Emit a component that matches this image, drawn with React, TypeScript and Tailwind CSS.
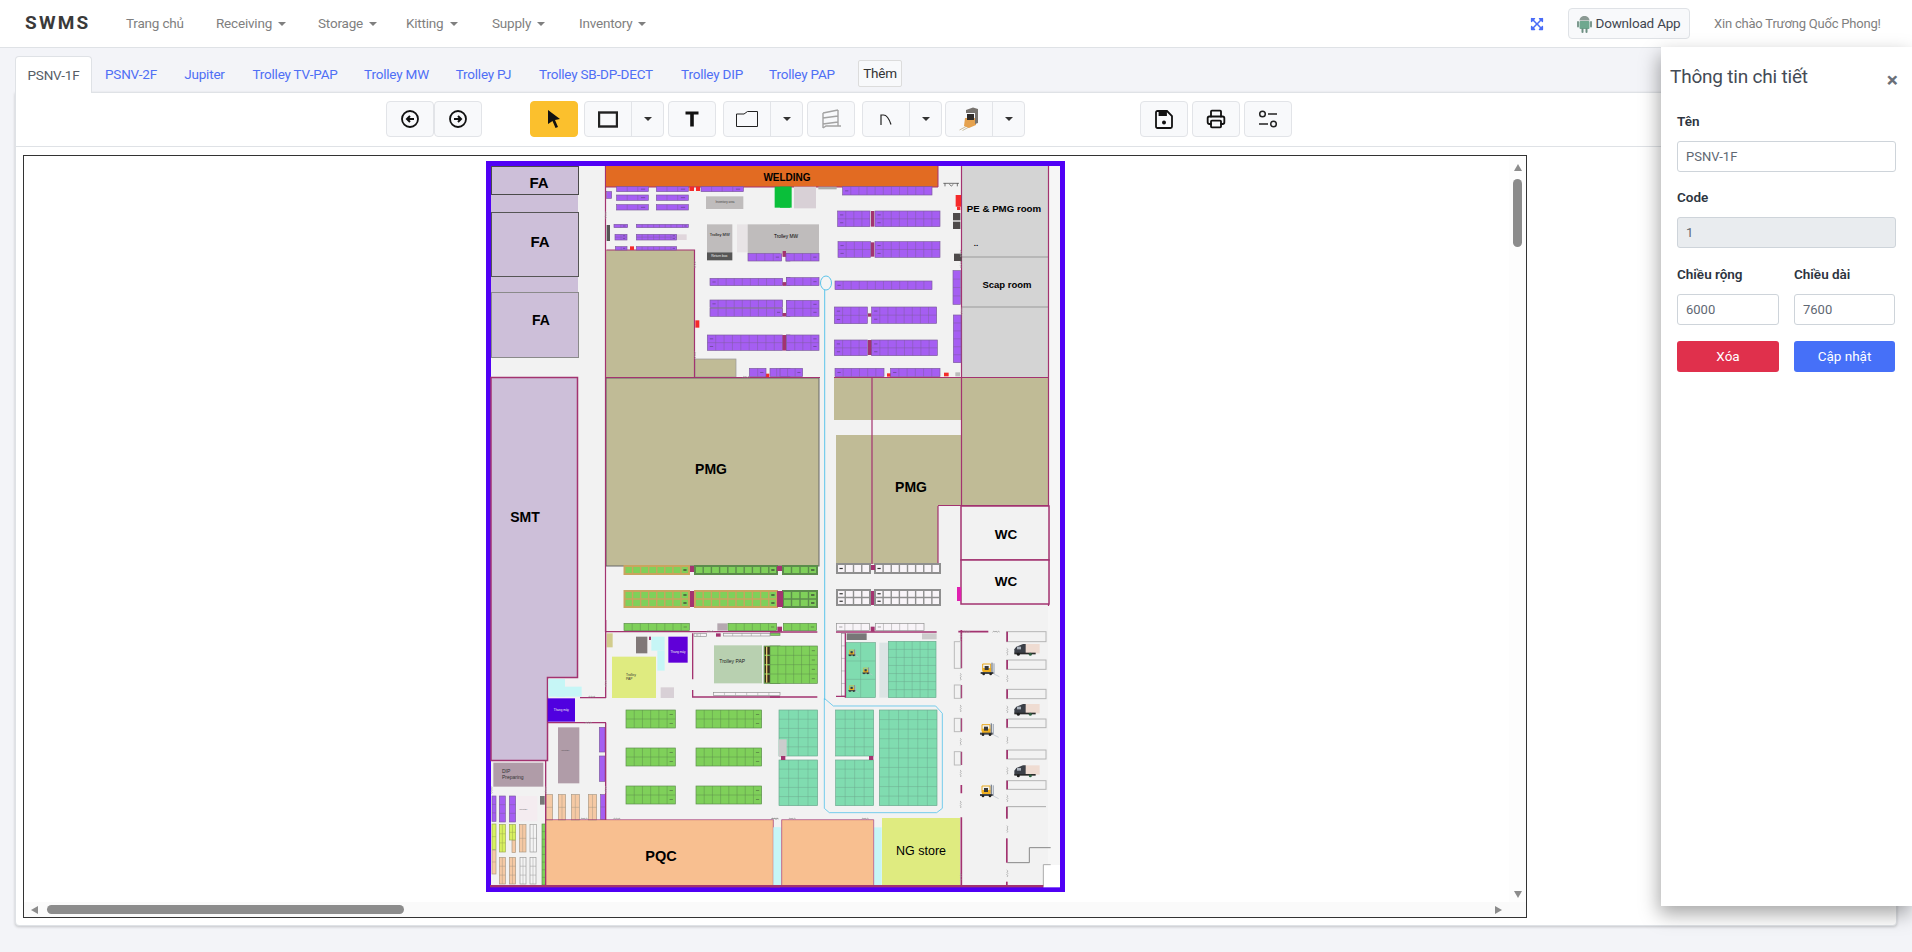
import React from "react";
import { FaExpandArrowsAlt } from "react-icons/fa";
import { Printer } from "lucide-react";

type R = [number, number, number, number, number, number, ("l" | "r" | "")?];
type B = [number, number, number, number, string];

function Rack({ d, fill, line }: { d: R; fill: string; line: string }) {
  const [x1, y1, x2, y2, c, r, tag] = d;
  const cw = (x2 - x1) / c;
  const rh = (y2 - y1) / r;
  const vs = Array.from({ length: c - 1 }, (_, i) => x1 + cw * (i + 1));
  const hs = Array.from({ length: r - 1 }, (_, i) => y1 + rh * (i + 1));
  const rows = Array.from({ length: r }, (_, i) => y1 + rh * (i + 0.5));
  return (
    <g>
      <rect x={x1} y={y1} width={x2 - x1} height={y2 - y1} fill={fill} stroke={line} strokeWidth={2} />
      {vs.map((x) => (
        <line key={x} x1={x} x2={x} y1={y1} y2={y2} stroke={line} strokeWidth={1.4} />
      ))}
      {hs.map((y) => (
        <line key={y} x1={x1} x2={x2} y1={y} y2={y} stroke={line} strokeWidth={1.4} />
      ))}
      {tag
        ? rows.map((y) => (
            <line
              key={y}
              x1={tag === "r" ? x2 - cw * 0.7 : x1 + cw * 0.3}
              x2={tag === "r" ? x2 - cw * 0.3 : x1 + cw * 0.7}
              y1={y}
              y2={y}
              stroke="#333"
              strokeWidth={1.2}
            />
          ))
        : null}
    </g>
  );
}

function Boxes({ list }: { list: B[] }) {
  return (
    <g>
      {list.map(([x1, y1, x2, y2, f], i) => (
        <rect key={i} x={x1} y={y1} width={x2 - x1} height={y2 - y1} fill={f} />
      ))}
    </g>
  );
}

function Racks({ list, fill, line }: { list: R[]; fill: string; line: string }) {
  return (
    <g>
      {list.map((d, i) => (
        <Rack key={i} d={d} fill={fill} line={line} />
      ))}
    </g>
  );
}

function SqV({ x, y }: { x: number; y: number }) {
  return <path d={`M${x} ${y} q7 3 1 7 q6 3 -1 7 q7 3 1 7`} fill="none" stroke="#9a9a9a" strokeWidth={2} />;
}

function SqH({ x, y }: { x: number; y: number }) {
  return <path d={`M${x} ${y} q3 -7 7 -1 q3 -6 7 1 q3 -7 7 -1`} fill="none" stroke="#8a8a8a" strokeWidth={2} />;
}

function Forklift({ x, y, s = 1 }: { x: number; y: number; s?: number }) {
  return (
    <g transform={`translate(${x} ${y}) scale(${s})`}>
      <path d="M6 4 H30 V24 H6 Z" fill="none" stroke="#e8a81c" strokeWidth={3} />
      <rect x={6} y={16} width={26} height={14} fill="#f0b020" />
      <rect x={12} y={10} width={12} height={12} fill="#3a3a3a" />
      <rect x={32} y={0} width={4} height={34} fill="#7f8794" />
      <rect x={38} y={2} width={4} height={32} fill="#aab2be" />
      <path d="M40 34 L56 42" stroke="#c4cad2" strokeWidth={2.5} />
      <rect x={0} y={28} width={38} height={6} fill="#42464c" />
      <circle cx={9} cy={34} r={4} fill="#222" />
      <circle cx={30} cy={34} r={4} fill="#222" />
    </g>
  );
}

function Truck({ x, y }: { x: number; y: number }) {
  return (
    <g transform={`translate(${x} ${y})`}>
      <rect x={28} y={0} width={48} height={28} fill="#efdcd2" />
      <path d="M0 16 L6 8 L26 0 L34 0 L34 28 L0 28 Z" fill="#3c4048" />
      <rect x={8} y={8} width={12} height={8} fill="#aab2bc" />
      <rect x={0} y={26} width={64} height={5} fill="#2a2a2a" />
      <circle cx={12} cy={31} r={4.5} fill="#1c1c1c" />
      <circle cx={48} cy={31} r={4.5} fill="#2f5f3f" />
    </g>
  );
}

const WALL = "#a33370";
const OLIVE = "#c0bb96";
const LAV = "#cdbfd9";
const CYAN = "#c6f6f6";
const GY = "#bfbcbc";
const PUR = "#a55ef2";
const PURL = "#7d5c9c";
const GRN = "#7fd05a";
const GRNL = "#5c8c4c";
const TEAL = "#80dcb0";
const TEALL = "#6ba88e";
const PCH = "#f5c9a4";
const PCHL = "#a99884";
const WRK = "#f8f4f8";
const WRKL = "#8f8f8f";

function FloorPlan() {
  const t = { fontFamily: '"Liberation Sans", Arial, sans-serif', fontWeight: 700, fill: "#000" };
  return (
    <svg width={580} height={732} viewBox="486 161 580 732" className="block">
      <rect x={486} y={161} width={579} height={731} fill="#5000f5" />
      <rect x={491} y={166} width={569} height={721} fill="#f2f2f2" />
      <rect x={1048} y={166} width={12} height={721} fill="#f6f6f6" />

      {/* left column */}
      <rect x={491} y={166} width={87} height={126} fill={LAV} />
      <rect x={491.5} y={166.5} width={87} height={28} fill={LAV} stroke="#4a4a4a" strokeWidth={1} />
      <rect x={491.5} y={212.5} width={87} height={64} fill={LAV} stroke="#555" strokeWidth={1} />
      <rect x={491.5} y={292.5} width={87} height={65} fill={LAV} stroke="#8a8a8a" strokeWidth={1} />
      <path d="M491 377.5 H577.5 V677.5 H547.5 V760.5 H491 Z" fill={LAV} stroke={WALL} strokeWidth={1.5} />

      {/* olive areas */}
      <rect x={606} y={250} width={89} height={127} fill={OLIVE} />
      <rect x={695} y={359} width={41} height={18} fill={OLIVE} stroke="#999" strokeWidth={0.7} />
      <rect x={606} y={378} width={213} height={188} fill={OLIVE} stroke="#666" strokeWidth={1} />
      <rect x={834} y={378} width={127} height={42} fill={OLIVE} />
      <rect x={836} y={435} width={36} height={129} fill={OLIVE} />
      <rect x={872} y={435} width={89} height={71} fill={OLIVE} />
      <rect x={872} y={506} width={66} height={58} fill={OLIVE} />
      <rect x={961} y={378} width={87} height={127} fill={OLIVE} />
      <path
        d="M872 378 V564 M834 377.5 H1048 M606.5 250 H694.5 V377 M606 377.5 H820 M938 506 V564 M938 505.5 H1048 M605.5 166 V632"
        fill="none"
        stroke={WALL}
        strokeWidth={1.2}
      />

      {/* rooms on right */}
      <rect x={962} y={166} width={86} height={211} fill="#d4d4d4" />
      <path d="M962 257 H1048 M962 307 H1048" stroke="#9a9a9a" strokeWidth={1} />
      <path d="M961.5 166 V506 M1048.5 166 V606" stroke={WALL} strokeWidth={1.2} fill="none" />
      <rect x={961} y={506} width={88} height={54} fill="#f2f2f2" stroke={WALL} strokeWidth={1.5} />
      <rect x={961} y={560} width={88} height={44} fill="#f2f2f2" stroke={WALL} strokeWidth={1.5} />
      <rect x={957} y={587} width={4} height={14} fill="#e020b0" />

      {/* welding */}
      <rect x={606} y={166} width={332} height={21} fill="#e26b22" />
      <path d="M606 187 H938 V166" fill="none" stroke={WALL} strokeWidth={1} />

      {/* top left quadrant */}
      <g transform="translate(480 155) scale(0.33333)">
        <Boxes
          list={[
            [678, 124, 790, 162, GY],
            [681, 208, 757, 292, GY],
            [681, 292, 757, 316, "#555"],
            [771, 208, 803, 292, "#e8e4e6"],
            [803, 208, 930, 295, GY],
            [884, 95, 930, 158, "#0abf3a"],
            [628, 95, 642, 108, "#f52a2a"],
            [648, 95, 660, 108, "#f52a2a"],
            [450, 274, 462, 285, "#f52a2a"],
            [380, 210, 390, 258, "#555"],
            [590, 238, 620, 255, "#e0d6dc"],
            [646, 496, 658, 518, "#f52a2a"],
            [856, 656, 868, 666, "#f52a2a"],
            [908, 288, 918, 305, WALL],
            [908, 382, 918, 392, WALL],
            [908, 474, 918, 484, WALL],
            [908, 540, 918, 586, WALL],
          ]}
        />
        <Racks
          fill={PUR}
          line={PURL}
          list={[
            [410, 95, 505, 110, 3, 1, "r"],
            [529, 95, 625, 110, 3, 1, "r"],
            [663, 95, 790, 110, 4, 1, "r"],
            [410, 120, 505, 136, 3, 1, "r"],
            [529, 120, 625, 136, 3, 1, "r"],
            [410, 149, 505, 165, 3, 1, "r"],
            [529, 149, 625, 165, 3, 1, "r"],
            [380, 110, 395, 130, 1, 1],
            [402, 208, 443, 218, 2, 1, "r"],
            [469, 208, 625, 218, 9, 1, "r"],
            [405, 238, 441, 255, 2, 2, "r"],
            [469, 238, 590, 255, 7, 2, "r"],
            [406, 275, 441, 285, 2, 1, "r"],
            [469, 275, 590, 285, 7, 1, "r"],
            [804, 295, 905, 318, 4, 1, "r"],
            [918, 295, 930, 318, 1, 1],
            [690, 370, 908, 392, 9, 1, "l"],
            [920, 368, 930, 392, 1, 1],
            [690, 435, 908, 458, 9, 1, "l"],
            [690, 460, 908, 484, 9, 1, "r"],
            [920, 436, 930, 484, 1, 2],
            [682, 540, 908, 586, 9, 2, "l"],
            [920, 540, 930, 586, 1, 2],
            [808, 640, 858, 665, 2, 1, "r"],
            [870, 640, 930, 665, 3, 1],
          ]}
        />
        <SqV x={375} y={170} />
        <SqV x={643} y={318} />
        <SqV x={643} y={590} />
        <SqH x={788} y={668} />
        <text x={719} y={243} fontSize={12} style={{ ...t, fontWeight: 400 }} textAnchor="middle">Trolley MW</text>
        <text x={718} y={306} fontSize={10} style={{ ...t, fontWeight: 400, fill: "#eee" }} textAnchor="middle">Return box</text>
        <text x={735} y={144} fontSize={9} style={{ ...t, fontWeight: 400, fill: "#444" }} textAnchor="middle">Inventory area</text>
      </g>

      {/* top right quadrant */}
      <g transform="translate(780 155) scale(0.33333)">
        <Boxes
          list={[
            [0, 208, 117, 295, GY],
            [0, 95, 35, 158, "#0abf3a"],
            [42, 95, 108, 160, "#d8d0d6"],
            [115, 95, 170, 103, "#aaa"],
            [519, 174, 541, 196, "#4e4a4a"],
            [519, 200, 541, 222, "#4e4a4a"],
            [522, 296, 545, 318, "#4e4a4a"],
            [527, 120, 543, 155, "#f52a2a"],
            [531, 155, 541, 165, "#f52a2a"],
            [321, 655, 333, 665, "#f52a2a"],
            [492, 653, 506, 664, "#f52a2a"],
            [526, 652, 540, 664, "#bbb"],
            [273, 168, 283, 215, WALL],
            [273, 262, 283, 305, WALL],
            [264, 475, 274, 485, WALL],
            [264, 555, 276, 600, WALL],
            [8, 288, 18, 305, WALL],
            [8, 382, 18, 392, WALL],
            [8, 474, 18, 484, WALL],
            [8, 540, 18, 586, WALL],
          ]}
        />
        <Racks
          fill={PUR}
          line={PURL}
          list={[
            [18, 295, 117, 318, 4, 1, "r"],
            [20, 368, 117, 392, 4, 1, "r"],
            [20, 436, 117, 484, 4, 2, "r"],
            [20, 540, 117, 586, 4, 2, "r"],
            [0, 640, 68, 665, 3, 1, "r"],
            [188, 95, 456, 120, 11, 1, "l"],
            [173, 168, 270, 215, 4, 2, "l"],
            [285, 168, 480, 215, 8, 2, "l"],
            [174, 260, 272, 307, 4, 2, "l"],
            [285, 260, 480, 307, 8, 2, "l"],
            [165, 378, 456, 404, 12, 1, "l"],
            [163, 456, 262, 506, 4, 2, "l"],
            [275, 456, 470, 505, 8, 2, "l"],
            [163, 555, 262, 602, 4, 2, "l"],
            [275, 555, 472, 602, 8, 2, "l"],
            [165, 640, 312, 665, 6, 1, "l"],
            [332, 640, 480, 665, 6, 1, "l"],
            [519, 347, 541, 448, 1, 4],
            [520, 480, 543, 623, 1, 6],
          ]}
        />
        <path d="M490 85 H537 M495 85 V94 M532 85 V94 M508 88 L514 93 L520 88" stroke="#333" strokeWidth={2} fill="none" />
        <SqV x={540} y={285} />
        <SqV x={540} y={318} />
        <SqV x={543} y={458} />
      </g>

      {/* green / white racks in the middle */}
      <Racks
        fill={GRN}
        line="#c9a45e"
        list={[
          [624.5, 566, 689, 574, 8, 1, "r"],
          [624.5, 591, 689, 607, 8, 2, "r"],
          [695, 591, 777, 607, 10, 2, "r"],
        ]}
      />
      <Racks
        fill={GRN}
        line={GRNL}
        list={[
          [695, 566, 777, 574, 10, 1, "r"],
          [783, 566, 817, 574, 4, 1, "r"],
          [783, 591, 817, 607, 4, 2, "r"],
        ]}
      />
      <Racks
        fill={WRK}
        line={WRKL}
        list={[
          [837, 564, 870, 573, 4, 1, "l"],
          [875, 564, 940, 573, 8, 1, "l"],
          [837, 590, 870, 605, 4, 2, "l"],
          [875, 590, 940, 605, 8, 2, "l"],
        ]}
      />
      <Boxes
        list={[
          [690, 566, 694, 572, WALL],
          [777, 566, 782, 571, WALL],
          [690, 591, 694, 607, WALL],
          [777, 591, 783, 607, WALL],
          [871, 565, 875, 570, WALL],
          [871, 591, 874, 605, WALL],
        ]}
      />

      {/* bottom left quadrant */}
      <g transform="translate(480 620) scale(0.33333)">
        <Boxes
          list={[
            [205, 177, 255, 230, CYAN],
            [230, 200, 305, 230, CYAN],
            [203, 235, 285, 305, "#5000e0"],
            [234, 322, 298, 490, "#b09ca8"],
            [40, 428, 190, 500, "#b09ca8"],
            [112, 528, 172, 604, "#f4ecf0"],
            [180, 528, 194, 554, "#777"],
            [396, 110, 528, 234, "#dfeb80"],
            [468, 50, 502, 100, "#807878"],
            [514, 50, 554, 92, CYAN],
            [532, 92, 554, 152, CYAN],
            [565, 50, 623, 128, "#6000d8"],
            [542, 202, 582, 234, "#d8d0d6"],
            [380, 40, 398, 82, "#d2cc8c"],
            [702, 76, 846, 190, "#b8d0b0"],
            [712, 10, 742, 32, "#b5a8b0"],
            [197, 600, 880, 795, "#f8bf90"],
            [880, 622, 900, 795, CYAN],
            [708, 40, 722, 50, WALL],
            [507, 50, 513, 60, WALL],
          ]}
        />
        <Racks
          fill={GRN}
          line={GRNL}
          list={[
            [432, 10, 628, 32, 8, 1, "r"],
            [744, 10, 890, 32, 6, 1, "r"],
            [438, 270, 586, 324, 6, 2, "r"],
            [648, 270, 845, 324, 8, 2, "r"],
            [438, 384, 586, 438, 6, 2, "r"],
            [648, 384, 845, 438, 8, 2, "r"],
            [438, 498, 586, 552, 6, 2, "r"],
            [648, 498, 845, 552, 8, 2, "r"],
            [852, 78, 900, 190, 2, 4],
            [872, 40, 900, 46, 1, 1],
          ]}
        />
        <Boxes
          list={[
            [854, 80, 870, 104, "#3a2c20"],
            [854, 108, 870, 132, "#3a2c20"],
            [854, 136, 870, 160, "#3a2c20"],
            [854, 164, 870, 188, "#3a2c20"],
            [858, 80, 862, 188, "#e8d070"],
          ]}
        />
        <Racks
          fill={WRK}
          line={WRKL}
          list={[
            [642, 40, 680, 50, 2, 1, "l"],
            [730, 40, 870, 48, 5, 1],
            [700, 218, 900, 226, 6, 1],
          ]}
        />
        <Racks
          fill={PUR}
          line={PURL}
          list={[
            [358, 322, 375, 396, 1, 1],
            [358, 408, 375, 484, 1, 1],
            [36, 528, 48, 604, 1, 3],
            [58, 528, 76, 606, 1, 3],
            [88, 528, 107, 606, 1, 3],
            [362, 524, 376, 598, 1, 2],
          ]}
        />
        <Racks
          fill={PCH}
          line={PCHL}
          list={[
            [198, 524, 218, 600, 1, 2],
            [235, 524, 257, 600, 2, 2],
            [274, 524, 298, 600, 2, 2],
            [325, 524, 350, 600, 2, 2],
            [36, 690, 48, 762, 1, 2],
            [118, 614, 138, 696, 2, 2],
            [58, 712, 76, 792, 2, 3],
            [88, 712, 107, 792, 2, 3],
            [96, 660, 107, 698, 1, 1],
          ]}
        />
        <Racks
          fill="#d8f060"
          line="#9aa850"
          list={[
            [36, 612, 48, 688, 1, 2],
            [58, 614, 76, 696, 2, 3],
            [88, 614, 107, 660, 2, 2],
          ]}
        />
        <Racks
          fill="#f4f4f4"
          line="#999"
          list={[
            [150, 614, 170, 696, 2, 2],
            [120, 712, 138, 792, 2, 3],
            [150, 712, 168, 792, 2, 3],
          ]}
        />
        <Rack d={[186, 612, 196, 795, 1, 8]} fill={GRN} line={GRNL} />
        <path
          d="M377 0 V234 M300 233 H378 M202 308 H378 M377 308 V600 M197 420 V795 M378 35 H900 M638 40 V178 M638 210 V231 H900"
          fill="none"
          stroke={WALL}
          strokeWidth={4}
        />
        <path d="M197 599 H880 M880 599 V795" fill="none" stroke={WALL} strokeWidth={2} />
        <rect x={30} y={795} width={870} height={7} fill={WALL} />
        <SqH x={325} y={232} />
        <SqH x={315} y={310} />
        <SqH x={302} y={598} />
        <SqH x={400} y={598} />
        <SqH x={873} y={598} />
        <SqH x={680} y={36} />
        <SqV x={375} y={180} />
        <SqV x={375} y={498} />
        <SqV x={195} y={500} />
        <SqV x={33} y={500} />
        <text x={244} y={272} fontSize={9} style={{ ...t, fontWeight: 400, fill: "#eee" }} textAnchor="middle">Thang máy</text>
        <text x={594} y={98} fontSize={9} style={{ ...t, fontWeight: 400, fill: "#eee" }} textAnchor="middle">Thang máy</text>
        <text x={438} y={168} fontSize={10} style={{ ...t, fontWeight: 400, fill: "#333" }}>Trolley</text>
        <text x={438} y={179} fontSize={10} style={{ ...t, fontWeight: 400, fill: "#333" }}>PAP</text>
        <text x={718} y={128} fontSize={15} style={{ ...t, fontWeight: 400, fill: "#222" }}>Trolley PAP</text>
        <text x={66} y={458} fontSize={15} style={{ ...t, fontWeight: 400, fill: "#333" }}>DIP</text>
        <text x={66} y={477} fontSize={15} style={{ ...t, fontWeight: 400, fill: "#333" }}>Preparing</text>
        <text x={118} y={570} fontSize={6} style={{ ...t, fontWeight: 400, fill: "#555" }}>Inventory</text>
        <text x={244} y={394} fontSize={6} style={{ ...t, fontWeight: 400, fill: "#444" }}>Inventory</text>
      </g>

      {/* bottom right quadrant */}
      <g transform="translate(770 620) scale(0.33333)">
        <Boxes
          list={[
            [10, 622, 34, 795, CYAN],
            [35, 600, 310, 795, "#f8bf90"],
            [312, 622, 335, 795, CYAN],
            [336, 594, 570, 795, "#dfeb80"],
            [328, 68, 355, 233, "#dce4e4"],
            [230, 40, 290, 60, "#777"],
            [456, 40, 500, 58, "#ccc"],
            [46, 408, 143, 416, "#f6f6f6"],
            [197, 408, 300, 416, "#f6f6f6"],
            [22, 20, 36, 35, WALL],
            [302, 20, 314, 35, WALL],
          ]}
        />
        <Racks
          fill={GRN}
          line={GRNL}
          list={[
            [40, 10, 140, 32, 4, 1, "r"],
            [0, 78, 142, 190, 6, 4, "r"],
          ]}
        />
        <Racks
          fill={TEAL}
          line={TEALL}
          list={[
            [27, 270, 143, 408, 4, 5],
            [27, 420, 143, 557, 4, 5],
            [197, 270, 311, 408, 4, 5],
            [197, 420, 311, 557, 4, 5],
            [328, 270, 501, 557, 6, 10],
            [228, 68, 316, 233, 2, 3],
            [355, 64, 498, 233, 6, 7],
          ]}
        />
        <Boxes
          list={[
            [27, 358, 50, 410, "#ccc"],
            [33, 408, 46, 420, WALL],
            [297, 408, 310, 420, WALL],
          ]}
        />
        <Racks
          fill={WRK}
          line={WRKL}
          list={[
            [200, 10, 298, 32, 4, 1, "l"],
            [316, 10, 462, 32, 6, 1, "l"],
            [214, 40, 226, 228, 1, 5],
          ]}
        />
        <path d="M198 36 H500 M226 40 V233 M198 229 H228" stroke={WALL} strokeWidth={4} fill="none" />
        <path d="M0 36 H142 M0 231 H142" stroke={WALL} strokeWidth={4} fill="none" />

        {/* blue route */}
        <path d="M163 235 L190 258 H497 L517 280 V565 L500 578 H178 L163 565 V235" fill="none" stroke="#5cc4ea" strokeWidth={2.5} />

        {/* walls and bays on right */}
        <path
          d="M574 30 V145 M574 195 V235 M574 295 V335 M574 395 V435 M574 495 V520 M574 592 V795 M565 35 H655"
          stroke={WALL}
          strokeWidth={5}
          fill="none"
        />
        {[
          [553, 65, 572, 145],
          [553, 195, 572, 235],
          [553, 295, 572, 335],
          [553, 395, 572, 435],
        ].map(([a, b, c, d]) => (
          <rect key={b} x={a} y={b} width={c - a} height={d - b} fill="none" stroke="#bbb" strokeWidth={3} />
        ))}
        {[
          [710, 35, 828, 65],
          [710, 120, 828, 148],
          [710, 208, 828, 236],
          [710, 297, 828, 323],
          [710, 390, 828, 417],
          [710, 482, 828, 508],
        ].map(([a, b, c, d]) => (
          <g key={b}>
            <rect x={a} y={b} width={c - a} height={d - b} fill="none" stroke="#b5b5b5" strokeWidth={3} />
            <rect x={a - 1} y={b} width={5} height={d - b} fill={WALL} />
          </g>
        ))}
        <path d="M712 596 V560 H828" fill="none" stroke="#aaa" strokeWidth={3} />
        <rect x={708} y={560} width={5} height={36} fill={WALL} />
        <path d="M712 728 H778 V683 H842" fill="none" stroke="#888" strokeWidth={3} />
        <rect x={708} y={655} width={5} height={73} fill={WALL} />
        <rect x={820} y={735} width={50} height={67} fill="#fff" />
        <path d="M842 734 H820 V800" fill="none" stroke="#aaa" strokeWidth={3} />
        <rect x={708} y={785} width={5} height={12} fill={WALL} />
        <rect x={0} y={795} width={820} height={7} fill={WALL} />
        <path d="M35 599 H311 M311 599 V795 M35 599 V795" fill="none" stroke={WALL} strokeWidth={2} />

        {[95, 175, 268, 360, 452, 535, 627, 760].map((y) => (
          <SqV key={y} x={710} y={y - 10} />
        ))}
        {[50, 170, 265, 365, 460, 553, 770].map((y) => (
          <SqV key={y} x={570} y={y - 10} />
        ))}
        <SqH x={580} y={37} />
        <SqH x={668} y={37} />
        <SqH x={5} y={598} />
        <SqH x={56} y={598} />
        <SqH x={275} y={598} />

        <Forklift x={632} y={128} />
        <Forklift x={630} y={310} />
        <Forklift x={630} y={494} />
        <Forklift x={235} y={88} s={0.55} />
        <Forklift x={277} y={142} s={0.55} />
        <Forklift x={235} y={195} s={0.55} />
        <Truck x={733} y={72} />
        <Truck x={733} y={252} />
        <Truck x={733} y={436} />
      </g>

      {/* labels */}
      <g style={t}>
        <text x={539} y={188} fontSize={15} textAnchor="middle">FA</text>
        <text x={540} y={247} fontSize={15} textAnchor="middle">FA</text>
        <text x={541} y={325} fontSize={14} textAnchor="middle">FA</text>
        <text x={525} y={522} fontSize={14} textAnchor="middle">SMT</text>
        <text x={711} y={474} fontSize={14} textAnchor="middle">PMG</text>
        <text x={911} y={492} fontSize={14} textAnchor="middle">PMG</text>
        <text x={1006} y={539} fontSize={13.5} textAnchor="middle">WC</text>
        <text x={1006} y={586} fontSize={13.5} textAnchor="middle">WC</text>
        <text x={661} y={861} fontSize={14.5} textAnchor="middle">PQC</text>
        <text x={787} y={181} fontSize={10} textAnchor="middle">WELDING</text>
        <text x={1004} y={212} fontSize={9.7} textAnchor="middle">PE &amp; PMG room</text>
        <text x={1007} y={288} fontSize={9.5} textAnchor="middle">Scap room</text>
        <text x={921} y={855} fontSize={12.5} style={{ fontWeight: 400 }} textAnchor="middle">NG store</text>
        <text x={976} y={246} fontSize={8} textAnchor="middle">..</text>
        <text x={786} y={238} fontSize={4.8} style={{ fontWeight: 400 }} textAnchor="middle">Trolley MW</text>
      </g>

      {/* pear */}
      <ellipse cx={826} cy={283} rx={5.5} ry={7} fill="#f4f4f4" stroke="#5cc4ea" strokeWidth={1} />
      <line x1={824.7} x2={824.7} y1={290} y2={700} stroke="#5cc4ea" strokeWidth={1} />
    </svg>
  );
}

function Caret() {
  return <span className="ml-[6px] inline-block h-0 w-0 border-x-[4px] border-t-[4px] border-x-transparent border-t-current align-middle" />;
}

function ToolBtn({ w = "w-[48px]", active, className = "", children }: { w?: string; active?: boolean; className?: string; children: React.ReactNode }) {
  return (
    <div className={`flex h-[36px] ${w} items-center justify-center rounded-[4px] border ${active ? "border-[#fbc02d] bg-[#fbc02d]" : "border-[#e2e4e8] bg-[#f8f9fb]"} ${className}`}>
      {children}
    </div>
  );
}

function Split({ className = "", children }: { className?: string; children: React.ReactNode }) {
  return (
    <div className={`flex h-[36px] w-[80px] rounded-[4px] border border-[#e2e4e8] bg-[#f8f9fb] ${className}`}>
      <div className="flex w-[47px] items-center justify-center border-r border-[#e2e4e8]">{children}</div>
      <div className="flex flex-1 items-center justify-center">
        <span className="h-0 w-0 border-x-[4px] border-t-[4px] border-x-transparent border-t-[#333]" />
      </div>
    </div>
  );
}

function ForkIcon() {
  return (
    <svg width="20" height="24" viewBox="0 0 20 24">
      <path d="M0.5 23 L8 19 M3.5 23.5 L10 20" stroke="#c9bea0" strokeWidth="1" />
      <path d="M5 19 L6 11 H17 V18 L10 21 Z" fill="#e5a24f" />
      <path d="M7 3 L14 0.5 L19 2 V16 L16 17 V6 H7 Z" fill="#77736f" />
      <rect x="8" y="7" width="7" height="6" fill="#2f2b29" />
    </svg>
  );
}

function AndroidIcon() {
  return (
    <svg width="15" height="18" viewBox="0 0 15 18" className="shrink-0">
      <path d="M2.5 5.5 C2.5 2.8 4.7 1 7.5 1 C10.3 1 12.5 2.8 12.5 5.5 Z" fill="#8b9a94" />
      <rect x="2.5" y="6" width="10" height="8" rx="1" fill="#6fa88f" />
      <rect x="0" y="6" width="2" height="6.5" rx="1" fill="#7e9a90" />
      <rect x="13" y="6" width="2" height="6.5" rx="1" fill="#7e9a90" />
      <rect x="4.5" y="13" width="2" height="5" rx="1" fill="#6d8f82" />
      <rect x="8.5" y="13" width="2" height="5" rx="1" fill="#6d8f82" />
    </svg>
  );
}

const tabs: [string, string][] = [
  ["PSNV-2F", "w-[78px]"],
  ["Jupiter", "w-[69px]"],
  ["Trolley TV-PAP", "w-[112px]"],
  ["Trolley MW", "w-[91px]"],
  ["Trolley PJ", "w-[83px]"],
  ["Trolley SB-DP-DECT", "w-[142px]"],
  ["Trolley DIP", "w-[90px]"],
  ["Trolley PAP", "w-[90px]"],
];

const menus: [string, string][] = [
  ["Receiving", "w-[102px]"],
  ["Storage", "w-[88px]"],
  ["Kitting", "w-[86px]"],
  ["Supply", "w-[87px]"],
  ["Inventory", "w-[90px]"],
];

function Field({ label, value, disabled, className = "" }: { label: string; value: string; disabled?: boolean; className?: string }) {
  return (
    <div className={`flex flex-col ${className}`}>
      <div className="h-[19px] text-[13.5px] leading-[19px] font-semibold text-[#2c3440]">{label}</div>
      <div className={`mt-[10px] flex h-[31px] items-center rounded-[3px] border border-[#ced4da] px-[8px] text-[13px] text-[#5f6873] ${disabled ? "bg-[#e9ecef]" : "bg-white"}`}>
        {value}
      </div>
    </div>
  );
}

export default function App() {
  return (
    <div className="relative h-[952px] w-[1912px] overflow-hidden bg-[#f3f4f8] font-['Roboto','Noto_Sans',sans-serif]">
      <nav className="flex h-[48px] items-center border-b border-[#dfe2e6] bg-white text-[13.5px] tracking-[-0.2px] text-[#7f7f7f]">
        <div className="ml-[25px] w-[101px] text-[19px] font-bold tracking-[2.2px] text-[#3a3a3a]">SWMS</div>
        <div className="w-[90px]">Trang chủ</div>
        {menus.map(([m, w]) => (
          <div key={m} className={`${w} flex items-center`}>
            {m}
            <Caret />
          </div>
        ))}
        <div className="ml-auto flex items-center">
          <FaExpandArrowsAlt className="mr-[24px] text-[14px] text-[#4a6cf7]" />
          <div className="flex h-[31px] w-[122px] items-center justify-center gap-[3px] rounded-[4px] border border-[#dfe2e6] bg-[#f8f9fb] text-[#3f4650]">
            <AndroidIcon />
            Download App
          </div>
          <div className="mr-[25px] ml-[24px] w-[173px] text-[13px] whitespace-nowrap text-[#7f7f7f]">Xin chào Trương Quốc Phong!</div>
        </div>
      </nav>

      <div className="mt-[8px] ml-[15px] flex h-[36px] items-stretch text-[13.5px] tracking-[-0.2px]">
        <div className="z-10 flex h-[37px] w-[77px] items-center justify-center rounded-t-[4px] border border-b-0 border-[#dfe2e6] bg-white text-[#565d66]">PSNV-1F</div>
        {tabs.map(([t, w]) => (
          <div key={t} className={`flex ${w} items-center justify-center text-[#4f6ff5]`}>
            {t}
          </div>
        ))}
        <div className="mt-[4px] ml-[11px] flex h-[27px] w-[44px] items-center justify-center rounded-[2px] border border-[#dcdcdc] bg-[#f8f9fb] text-[#333]">Thêm</div>
      </div>

      <div className="ml-[15px] h-[834px] w-[1882px] rounded-b-[4px] border border-[#dfe2e6] bg-white shadow-[0_1px_3px_rgba(0,0,0,0.2)]">
        <div className="flex h-[54px] items-start border-b border-[#dfe2e6] pt-[8px] pl-[370px]">
          <ToolBtn>
            <svg width="20" height="20" viewBox="0 0 20 20" fill="none" stroke="#111" strokeWidth="1.8">
              <circle cx="10" cy="10" r="8" />
              <path d="M14 10H7M10 7L7 10L10 13" strokeWidth="2" />
            </svg>
          </ToolBtn>
          <ToolBtn>
            <svg width="20" height="20" viewBox="0 0 20 20" fill="none" stroke="#111" strokeWidth="1.8">
              <circle cx="10" cy="10" r="8" />
              <path d="M6 10H13M10 7L13 10L10 13" strokeWidth="2" />
            </svg>
          </ToolBtn>
          <ToolBtn active className="ml-[48px]">
            <svg width="16" height="20" viewBox="0 0 16 20">
              <path d="M2 1 L14 10 L9 11 L12 18 L9.5 19 L6.5 12 L2 15 Z" fill="#111" />
            </svg>
          </ToolBtn>
          <Split className="ml-[6px]">
            <svg width="20" height="17" viewBox="0 0 20 17">
              <rect x="1" y="1.5" width="18" height="14" fill="none" stroke="#222" strokeWidth="2.4" />
            </svg>
          </Split>
          <ToolBtn className="ml-[4px]">
            <svg width="14" height="16" viewBox="0 0 14 16">
              <path d="M0.5 0.5H13.5V3.5H8.8V15.5H5.2V3.5H0.5Z" fill="#111" />
            </svg>
          </ToolBtn>
          <Split className="ml-[7px]">
            <svg width="22" height="16" viewBox="0 0 22 16" fill="none" stroke="#222" strokeWidth="1">
              <path d="M0.5 3 H8 L11.5 0.5 H21.5 V15.5 H0.5 Z" />
            </svg>
          </Split>
          <ToolBtn className="ml-[4px]">
            <svg width="22" height="22" viewBox="0 0 22 22" fill="none" stroke="#a3a3a3" strokeWidth="1.4">
              <path d="M3 5V20M18 2V18M3 5L18 2M3 10L18 8M3 16L18 14M3 20L6 18H21" />
            </svg>
          </ToolBtn>
          <Split className="ml-[7px]">
            <svg width="12" height="11" viewBox="0 0 12 11" fill="none" stroke="#222" strokeWidth="1.2">
              <path d="M1 11V1H3.5C7 1 9.5 6 11 10.5" />
            </svg>
          </Split>
          <Split className="ml-[3px]">
            <ForkIcon />
          </Split>
          <ToolBtn className="ml-[115px]">
            <svg width="18" height="19" viewBox="0 0 18 19" fill="none" stroke="#111" strokeWidth="1.8">
              <path d="M1 2.5C1 1.6 1.6 1 2.5 1H12L17 6V16.5C17 17.4 16.4 18 15.5 18H2.5C1.6 18 1 17.4 1 16.5Z" />
              <path d="M4.5 1.5H11V5H4.5Z" fill="#111" />
              <circle cx="9" cy="12.5" r="2" fill="#111" stroke="none" />
            </svg>
          </ToolBtn>
          <ToolBtn className="ml-[4px]">
            <Printer size={20} strokeWidth={2.2} color="#111" />
          </ToolBtn>
          <ToolBtn className="ml-[4px]">
            <svg width="20" height="18" viewBox="0 0 20 18" fill="none" stroke="#222" strokeWidth="1.5">
              <circle cx="4.5" cy="4" r="2.8" />
              <circle cx="15.5" cy="14" r="2.8" />
              <path d="M10 4H19M1 14H10" />
            </svg>
          </ToolBtn>
        </div>

        <div className="mt-[8px] ml-[7px] flex h-[763px] w-[1504px] flex-col border border-[#333] bg-white">
          <div className="flex min-h-0 flex-1">
            <div className="flex-1 pt-[5px] pl-[462px]">
              <FloorPlan />
            </div>
            <div className="flex w-[17px] flex-col items-center bg-[#fdfdfd] pt-[8px]">
              <span className="h-0 w-0 border-x-[4px] border-b-[7px] border-x-transparent border-b-[#8c8c8c]" />
              <div className="mt-[8px] h-[68px] w-[9px] rounded-[5px] bg-[#8c8c8c]" />
              <span className="mt-auto mb-[4px] h-0 w-0 border-x-[4px] border-t-[7px] border-x-transparent border-t-[#8c8c8c]" />
            </div>
          </div>
          <div className="flex h-[15px] items-center bg-[#fafafa] pr-[24px] pl-[7px]">
            <span className="h-0 w-0 border-y-[4px] border-r-[7px] border-y-transparent border-r-[#8c8c8c]" />
            <div className="ml-[9px] h-[9px] w-[357px] rounded-[5px] bg-[#8c8c8c]" />
            <span className="ml-auto h-0 w-0 border-y-[4px] border-l-[7px] border-y-transparent border-l-[#8c8c8c]" />
          </div>
        </div>
      </div>

      <aside className="absolute top-[47px] left-[1661px] h-[859px] w-[251px] bg-white shadow-[-2px_8px_18px_rgba(0,0,0,0.35)]">
        <div className="flex items-start justify-between pt-[17px] pr-[14px] pl-[9px]">
          <div className="text-[19px] leading-[26px] tracking-[-0.2px] text-[#444b55]">Thông tin chi tiết</div>
          <div className="mt-[6px] text-[21px] leading-[20px] font-bold text-[#6b7078]">×</div>
        </div>
        <div className="mt-[22px] px-[16px]">
          <Field label="Tên" value="PSNV-1F" />
          <Field className="mt-[16px]" label="Code" value="1" disabled />
          <div className="mt-[17px] flex gap-[15px]">
            <Field className="w-[102px]" label="Chiều rộng" value="6000" />
            <Field className="w-[101px]" label="Chiều dài" value="7600" />
          </div>
          <div className="mt-[16px] flex gap-[15px] text-[13.5px] text-white">
            <div className="flex h-[31px] w-[102px] items-center justify-center rounded-[3px] bg-[#e0304c]">Xóa</div>
            <div className="flex h-[31px] w-[101px] items-center justify-center rounded-[3px] bg-[#4670f8]">Cập nhật</div>
          </div>
        </div>
      </aside>
    </div>
  );
}
